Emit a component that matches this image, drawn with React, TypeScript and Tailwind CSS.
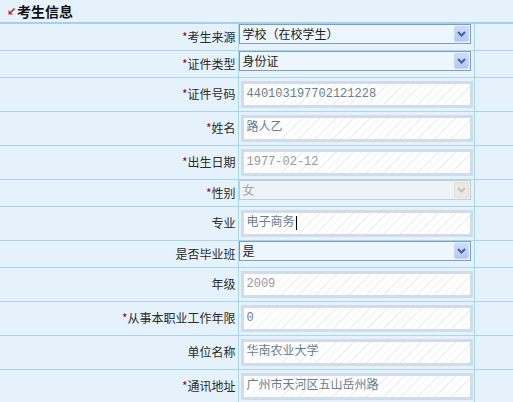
import React from 'react'

type Row = {
  kind: 'select' | 'input'
  label: string
  req?: boolean
  value: string
  disabled?: boolean
  light?: boolean
  caret?: boolean
}

const rows: Row[] = [
  { kind: 'select', label: '考生来源', req: true, value: '学校（在校学生）' },
  { kind: 'select', label: '证件类型', req: true, value: '身份证' },
  { kind: 'input', label: '证件号码', req: true, value: '440103197702121228' },
  { kind: 'input', label: '姓名', req: true, value: '路人乙' },
  { kind: 'input', label: '出生日期', req: true, value: '1977-02-12', light: true },
  { kind: 'select', label: '性别', req: true, value: '女', disabled: true },
  { kind: 'input', label: '专业', value: '电子商务', caret: true },
  { kind: 'select', label: '是否毕业班', value: '是' },
  { kind: 'input', label: '年级', value: '2009', light: true },
  { kind: 'input', label: '从事本职业工作年限', req: true, value: '0' },
  { kind: 'input', label: '单位名称', value: '华南农业大学' },
  { kind: 'input', label: '通讯地址', req: true, value: '广州市天河区五山岳州路' },
]

function Chevron({ color }: { color: string }) {
  return (
    <svg width="9" height="6" viewBox="0 0 9 6">
      <path d="M1 1 L4.5 4.5 L8 1" fill="none" stroke={color} strokeWidth="2" />
    </svg>
  )
}

function FakeSelect({ value, disabled }: { value: string; disabled?: boolean }) {
  return (
    <div
      className={
        'flex h-[20px] w-[232px] items-center border pl-[3px] pr-[1px] ' +
        (disabled ? 'border-[#c5ccd3] bg-[#eef3f7] text-[#a6a6a6]' : 'border-[#7f9db9] bg-[#eef6fd] text-[#1a1a1a]')
      }
    >
      <span className="flex-1 leading-none">{value}</span>
      <div
        className={
          'flex h-[16px] w-[15px] items-center justify-center rounded-[2px] border ' +
          (disabled
            ? 'border-[#e2e0d8] bg-[#ece9e2]'
            : 'border-[#c6d6fc] bg-gradient-to-b from-[#cddbfd] to-[#b4c7f5]')
        }
      >
        <Chevron color={disabled ? '#c4c2b8' : '#4d6089'} />
      </div>
    </div>
  )
}

function FakeInput({ value, light, caret }: { value: string; light?: boolean; caret?: boolean }) {
  return (
    <div className="ml-[2px] flex h-[27px] w-[232px] items-center border-[3px] border-[#d0dcea] bg-[repeating-linear-gradient(135deg,#ffffff_0px,#ffffff_5px,#f0f0f0_5px,#f0f0f0_6px)] pl-[3px]">
      <span
        className={
          "font-['Liberation_Mono','Noto_Sans_CJK_SC',monospace] text-[12px] leading-none " +
          (light ? 'text-[#9a9a9a]' : 'text-[#6b7d8d]')
        }
      >
        {value}
      </span>
      {caret && <span className="ml-[1px] h-[14px] w-[1px] bg-black" />}
    </div>
  )
}

export default function App() {
  return (
    <div className="h-[402px] w-[513px] overflow-hidden bg-[#e5f2fc] font-['Noto_Sans_CJK_SC',sans-serif] text-[12px] text-[#2a2a2a]">
      <div className="flex h-[22px] items-center gap-[2px] pl-[8px]">
        <svg width="7" height="7" viewBox="0 0 7 7">
          <path d="M6.5 0.5 L2.5 4.5" stroke="#c8283a" strokeWidth="1.6" />
          <path d="M0.5 2 L0.5 6.5 L5 6.5 Z" fill="#c8283a" />
        </svg>
        <span className="text-[14px] font-bold text-[#111]">考生信息</span>
      </div>
      <table className="w-full border-collapse border-t-2 border-[#a3d0ea]">
        <tbody>
          {rows.map((r) => (
            <tr
              key={r.label}
              className={'border-b border-[#a8d8e8] ' + (r.kind === 'select' ? 'h-[27px]' : 'h-[34px]')}
            >
              <td className="w-[238px] border-r border-[#a8d8e8] pr-[2px] text-right align-middle">
                {r.req && <span className="text-[#8c0a2c]">*</span>}
                {r.label}
              </td>
              <td className={'w-[236px] border-r border-[#a8d8e8] p-0 ' + (r.kind === 'select' ? 'align-top' : 'align-middle')}>
                {r.kind === 'select' ? (
                  <FakeSelect value={r.value} disabled={r.disabled} />
                ) : (
                  <FakeInput value={r.value} light={r.light} caret={r.caret} />
                )}
              </td>
              <td className="p-0" />
            </tr>
          ))}
        </tbody>
      </table>
    </div>
  )
}
